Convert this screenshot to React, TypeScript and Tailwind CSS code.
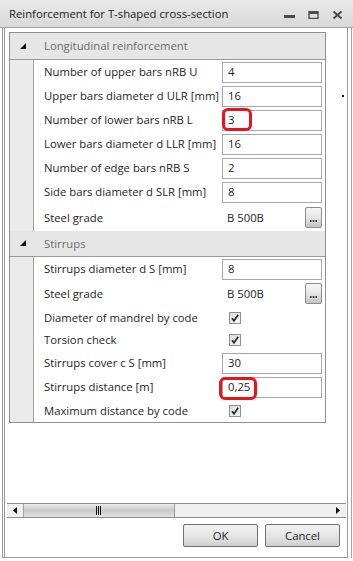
import React from 'react';

type Row = {
  label: string;
  kind: 'input' | 'select' | 'check';
  value?: string;
  h: string;
};

const longRows: Row[] = [
  { label: 'Number of upper bars nRB U', kind: 'input', value: '4', h: 'h-[24px]' },
  { label: 'Upper bars diameter d ULR [mm]', kind: 'input', value: '16', h: 'h-[24px]' },
  { label: 'Number of lower bars nRB L', kind: 'input', value: '3', h: 'h-[24px]' },
  { label: 'Lower bars diameter d LLR [mm]', kind: 'input', value: '16', h: 'h-[24px]' },
  { label: 'Number of edge bars nRB S', kind: 'input', value: '2', h: 'h-[24px]' },
  { label: 'Side bars diameter d SLR [mm]', kind: 'input', value: '8', h: 'h-[24px]' },
  { label: 'Steel grade', kind: 'select', value: 'B 500B', h: 'h-[27px]' },
];

const stirrupRows: Row[] = [
  { label: 'Stirrups diameter d S [mm]', kind: 'input', value: '8', h: 'h-[24px]' },
  { label: 'Steel grade', kind: 'select', value: 'B 500B', h: 'h-[25px]' },
  { label: 'Diameter of mandrel by code', kind: 'check', h: 'h-[23px]' },
  { label: 'Torsion check', kind: 'check', h: 'h-[22px]' },
  { label: 'Stirrups cover c S [mm]', kind: 'input', value: '30', h: 'h-[24px]' },
  { label: 'Stirrups distance [m]', kind: 'input', value: '0,25', h: 'h-[24px]' },
  { label: 'Maximum distance by code', kind: 'check', h: 'h-[23px]' },
];

function CheckBox() {
  return (
    <div className="w-[12px] h-[12px] border border-[#8e8f8f] bg-linear-to-br from-[#dcdcdc] to-[#f6f6f6] flex items-center justify-center">
      <svg width="10" height="10" viewBox="0 0 10 10">
        <path d="M2 5.2 L4 7.8 L8.2 1.8" fill="none" stroke="#2a2a2a" strokeWidth="1.7" />
      </svg>
    </div>
  );
}

function Header({ label, h }: { label: string; h: string }) {
  return (
    <div className={`${h} shrink-0 flex items-center bg-[#e6e6e6] border-b border-[#9a9a9a]`}>
      <div className="w-[24px] flex justify-center pl-[1px]">
        <svg width="7" height="7" viewBox="0 0 7 7">
          <path d="M7 0 L7 6 L1 6 Z" fill="#111" />
        </svg>
      </div>
      <span className="pl-[10px] text-[#6d6d6d]">{label}</span>
    </div>
  );
}

function PropRow({ row }: { row: Row }) {
  return (
    <div className={`${row.h} shrink-0 flex`}>
      <div className="w-[24px] shrink-0 bg-[#ebebeb] border-r border-[#a3a3a3]" />
      <div className="w-[185px] shrink-0 flex items-center pl-[10px] whitespace-nowrap overflow-hidden">
        {row.label}
      </div>
      <div className="flex-1 flex items-center pl-[3px]">
        {row.kind === 'input' && (
          <div className="w-[100px] h-[21px] border border-[#a5a7ad] bg-white flex items-center pl-[5px]">
            {row.value}
          </div>
        )}
        {row.kind === 'select' && (
          <div className="w-[100px] flex items-center">
            <span className="pl-[5px]">{row.value}</span>
            <div className="ml-auto w-[17px] h-[21px] border border-[#8c8c8c] rounded-[2px] bg-linear-to-b from-[#f6f6f6] via-[#e6e6e6] to-[#c4c4c4] flex items-end justify-center pb-[5px]">
              <svg width="7" height="2" viewBox="0 0 7 2">
                <rect x="0" y="0" width="1.5" height="2" fill="#333" />
                <rect x="2.75" y="0" width="1.5" height="2" fill="#333" />
                <rect x="5.5" y="0" width="1.5" height="2" fill="#333" />
              </svg>
            </div>
          </div>
        )}
        {row.kind === 'check' && (
          <div className="pl-[7px]">
            <CheckBox />
          </div>
        )}
      </div>
    </div>
  );
}

function DlgButton({ label }: { label: string }) {
  return (
    <button className="w-[75px] h-[23px] border border-[#707070] rounded-[2px] bg-linear-to-b from-[#f2f2f2] via-[#e6e6e6] to-[#cfcfcf] text-[#1e1e1e] flex items-center justify-center">
      {label}
    </button>
  );
}

export default function App() {
  return (
    <div className="relative w-[353px] h-[561px] bg-white overflow-hidden flex flex-col font-['Segoe_UI','Open_Sans',sans-serif] text-[11.3px] leading-none text-[#1e1e1e]">
      {/* title bar */}
      <div className="h-[28px] shrink-0 flex items-center bg-linear-to-b from-[#e9e9e9] to-[#d8d8d8] border-b border-[#a4a4a4] pl-[9px] pr-[10px]">
        <span className="text-[11.3px] text-[#202020]">Reinforcement for T-shaped cross-section</span>
        <div className="ml-auto flex items-center gap-[13px] pt-[2px]">
          <svg width="11" height="8" viewBox="0 0 11 8">
            <rect x="0" y="4" width="11" height="3" fill="#4a4a4a" />
          </svg>
          <svg width="11" height="8" viewBox="0 0 11 8">
            <rect x="1" y="0.5" width="9" height="7" fill="none" stroke="#4a4a4a" strokeWidth="1.4" />
            <rect x="1" y="0.5" width="9" height="2.5" fill="#4a4a4a" />
          </svg>
          <svg width="11" height="8" viewBox="0 0 11 8">
            <path d="M1.5 0.5 L9.5 7.5 M9.5 0.5 L1.5 7.5" stroke="#4a4a4a" strokeWidth="2" />
          </svg>
        </div>
      </div>

      {/* window body */}
      <div className="flex-1 flex pl-[2px] pb-[3px]">
        <div className="w-[346px] flex flex-col border-l-[3px] border-double border-r border-b border-[#9a9a9a] bg-white">
          {/* scroll viewer */}
          <div className="flex-1 flex flex-col pl-[2px] pr-[1px]">
            <div className="flex-1 flex flex-col pl-[2px] pt-[4px]">
              <div className="w-[317px] h-[391px] flex flex-col border border-[#8f8f8f]">
                <Header label="Longitudinal reinforcement" h="h-[27px]" />
                {longRows.map((r, i) => (
                  <PropRow key={'l' + i} row={r} />
                ))}
                <Header label="Stirrups" h="h-[26px]" />
                {stirrupRows.map((r, i) => (
                  <PropRow key={'s' + i} row={r} />
                ))}
              </div>
            </div>

            {/* horizontal scrollbar */}
            <div className="h-[15px] shrink-0 flex border-y border-[#8d8d8d] bg-[#efefef]">
              <div className="w-[17px] flex items-center justify-center border-r border-[#a0a0a0]">
                <svg width="4" height="7" viewBox="0 0 4 7">
                  <path d="M4 0 L0 3.5 L4 7 Z" fill="#111" />
                </svg>
              </div>
              <div className="w-[151px] border-r border-[#9a9a9a] bg-linear-to-b from-[#ececec] via-[#c9c9c9] to-[#e2e2e2] flex items-center pl-[72px]">
                <svg width="6" height="9" viewBox="0 0 6 9">
                  <path d="M0.5 0 V9 M2.5 0 V9 M4.5 0 V9" stroke="#111" strokeWidth="1" />
                </svg>
              </div>
              <div className="flex-1" />
              <div className="w-[16px] flex items-center justify-center">
                <svg width="4" height="7" viewBox="0 0 4 7">
                  <path d="M0 0 L4 3.5 L0 7 Z" fill="#111" />
                </svg>
              </div>
            </div>
          </div>

          {/* buttons */}
          <div className="shrink-0 flex justify-end gap-[7px] pt-[6px] pb-[10px] pr-[7px]">
            <DlgButton label="OK" />
            <DlgButton label="Cancel" />
          </div>
        </div>
        <div className="w-px bg-[#a3a3a3] ml-[3px]" />
      </div>

      {/* highlight marks */}
      <div className="absolute left-[222px] top-[108px] w-[30px] h-[23px] border-[3px] border-[#e8141b] rounded-[6px]" />
      <div className="absolute left-[219px] top-[377px] w-[38px] h-[23px] border-[3px] border-[#e8141b] rounded-[6px]" />
      <div className="absolute left-[342px] top-[95px] w-[2px] h-[2px] bg-[#111]" />
    </div>
  );
}
